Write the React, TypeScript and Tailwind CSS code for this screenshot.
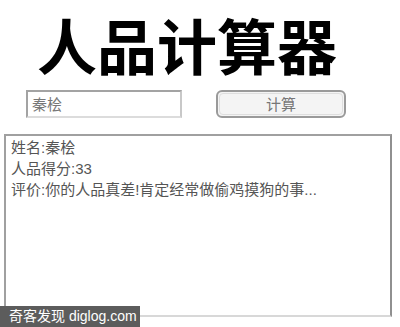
export default function App() {
  return (
    <div className="relative w-[400px] h-[327px] bg-white overflow-hidden">
      <h1 className="pl-[37px] text-[60px] leading-[88px] font-bold text-black font-['Noto_Sans_CJK_SC',sans-serif]">
        人品计算器
      </h1>
      <div className="flex items-center mt-[2px] pl-[26px]">
        <div className="w-[156px] h-[28px] border-2 border-[#a3a3a3] border-b-[#dcdcdc] border-r-[#c8c8c8] flex items-center pl-[4px] text-[15px] text-[#777] font-['Noto_Sans_CJK_SC',serif]">
          秦桧
        </div>
        <div className="ml-[34px] w-[130px] h-[28px] rounded-[6px] border-2 border-[#9a9a9a] bg-[#f4f4f4] p-[1px]">
          <div className="w-full h-full rounded-[4px] border border-[#dedede] flex items-center justify-center text-[15px] text-[#777] font-['Noto_Sans_CJK_SC',serif]">
            计算
          </div>
        </div>
      </div>
      <div className="ml-[4px] mt-[16px] w-[388px] h-[183px] border-2 border-[#a0a0a0] border-b-[#d8d8d8] border-r-[#909090] px-[5px] pt-[1px] text-[15px] leading-[21px] text-[#555] font-['Liberation_Sans','Noto_Sans_CJK_SC',sans-serif]">
        <div>姓名:秦桧</div>
        <div>人品得分:33</div>
        <div>评价:你的人品真差!肯定经常做偷鸡摸狗的事...</div>
      </div>
      <div className="absolute left-0 bottom-0 w-[140px] h-[21px] bg-[#5c5c5c] flex items-center pl-[9px] text-[14px] text-white font-['Liberation_Sans','Noto_Sans_CJK_SC',sans-serif]">
        奇客发现 diglog.com
      </div>
    </div>
  );
}
